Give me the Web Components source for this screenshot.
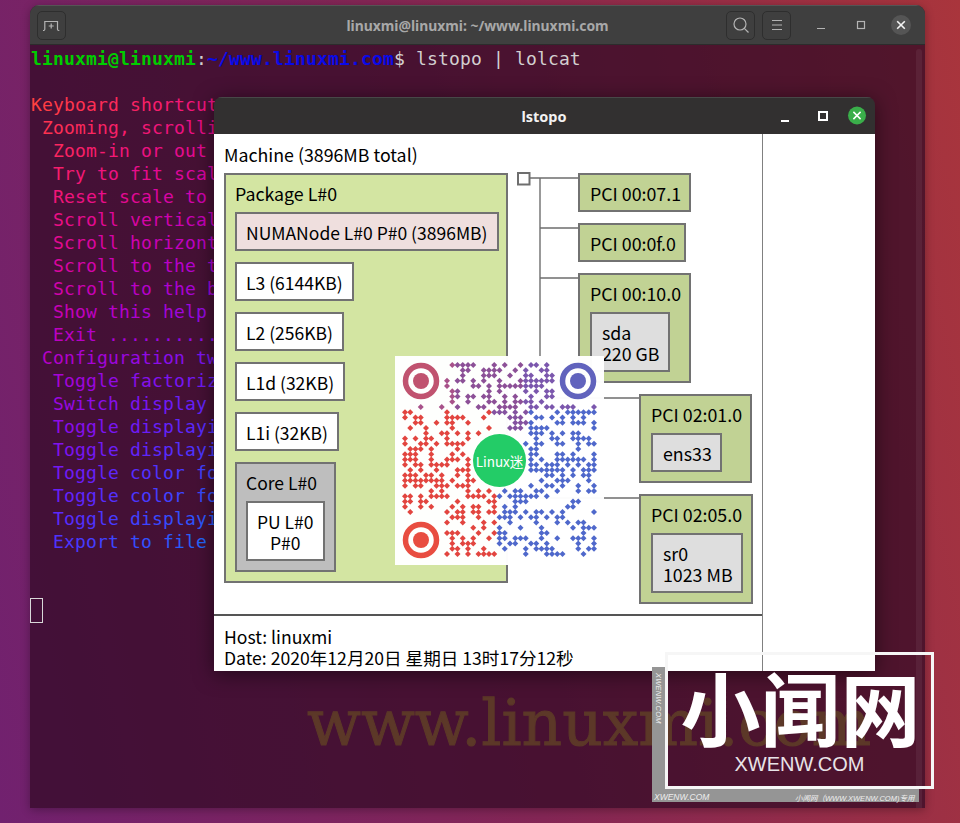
<!DOCTYPE html>
<html>
<head>
<meta charset="utf-8">
<title>lstopo</title>
<style>
    html, body { margin: 0; padding: 0; overflow: hidden; background: #7a2860; }
</style>
</head>
<body>
<desk-top>
    <term-window style="left:30px;top:5px"></term-window>
    <stamp-text style="left:307px;top:686px"></stamp-text>
    <topo-window style="left:214px;top:97px">
        <topo-box kind="package" parent style="left:10px;top:39px;width:284px" label="Package L#0">
            <topo-box kind="numa" label="NUMANode L#0 P#0 (3896MB)"></topo-box>
            <topo-box label="L3 (6144KB)"></topo-box>
            <topo-box label="L2 (256KB)"></topo-box>
            <topo-box label="L1d (32KB)"></topo-box>
            <topo-box label="L1i (32KB)"></topo-box>
            <topo-box kind="core" parent label="Core L#0">
                <topo-box label="PU L#0&#10;P#0" center></topo-box>
            </topo-box>
        </topo-box>
        <topo-box kind="pci" style="left:364px;top:39px" label="PCI 00:07.1"></topo-box>
        <topo-box kind="pci" style="left:364px;top:89px" label="PCI 00:0f.0"></topo-box>
        <topo-box kind="pci" parent style="left:364px;top:139px" label="PCI 00:10.0">
            <topo-box kind="dev" label="sda&#10;220 GB"></topo-box>
        </topo-box>
        <topo-box kind="pci" parent style="left:425px;top:260px" label="PCI 02:01.0">
            <topo-box kind="dev" label="ens33"></topo-box>
        </topo-box>
        <topo-box kind="pci" parent style="left:425px;top:360px" label="PCI 02:05.0">
            <topo-box kind="dev" label="sr0&#10;1023 MB"></topo-box>
        </topo-box>
    </topo-window>
    <qr-badge style="left:395px;top:356px"></qr-badge>
    <xwenw-mark style="left:652px;top:652px"></xwenw-mark>
</desk-top>

<script>
class DeskTop extends HTMLElement {
    constructor() {
        super();
        this.attachShadow({ mode: 'open' });
        this.shadowRoot.innerHTML = `
            <style>
                :host {
                    display: block;
                    position: relative;
                    width: 960px;
                    height: 823px;
                    overflow: hidden;
                    background: linear-gradient(78deg, #71216f 0%, #842655 48%, #a9353c 100%);
                }
                ::slotted(*) { position: absolute; }
            </style>
            <slot></slot>
        `;
    }
}

// only what shows left of the lstopo window
const termLines = [
    'Keyboard shortcut',
    ' Zooming, scrolli',
    '  Zoom-in or out',
    '  Try to fit scal',
    '  Reset scale to',
    '  Scroll vertical',
    '  Scroll horizont',
    '  Scroll to the t',
    '  Scroll to the b',
    '  Show this help',
    '  Exit ..........',
    ' Configuration tw',
    '  Toggle factoriz',
    '  Switch display',
    '  Toggle displayi',
    '  Toggle displayi',
    '  Toggle color fo',
    '  Toggle color fo',
    '  Toggle displayi',
    '  Export to file'
];

// same sine rainbow lolcat uses
function lolColor(row, col) {
    const t = 0.1 * (row + col / 3) + Math.PI / 2;
    const c = (p) => Math.round(Math.sin(t + p) * 127 + 128);
    return `rgb(${c(0)},${c(2 * Math.PI / 3)},${c(4 * Math.PI / 3)})`;
}

class TermWindow extends HTMLElement {
    constructor() {
        super();
        this.attachShadow({ mode: 'open' });
    }

    connectedCallback() {
        const rows = termLines.map((line, row) => {
            const chars = [...line].map((ch, col) => `<span style="color:${lolColor(row, col)}">${ch}</span>`).join('');
            return `<div class="line">${chars}</div>`;
        }).join('');

        this.shadowRoot.innerHTML = `
            <style>
                :host {
                    display: flex;
                    flex-direction: column;
                    width: 895px;
                    height: 803px;
                    border-radius: 9px 9px 0 0;
                    overflow: hidden;
                    background: rgba(48, 10, 36, .72);
                    box-shadow: 0 2px 10px rgba(0,0,0,.3);
                }
                header {
                    flex: none;
                    height: 40px;
                    display: flex;
                    align-items: center;
                    position: relative;
                    padding: 0 14px 0 7px;
                    box-sizing: border-box;
                    background: #3f3f3f;
                    border-top: 1px solid #555;
                    border-bottom: 1px solid #2c2c2c;
                }
                h1 {
                    position: absolute;
                    left: 0;
                    right: 0;
                    margin: 0;
                    text-align: center;
                    font: 700 13.9px "Noto Sans", sans-serif;
                    color: #a8a8a8;
                }
                .btn {
                    position: relative;
                    width: 29px;
                    height: 29px;
                    box-sizing: border-box;
                    border: 1px solid #2e2e2e;
                    border-radius: 5px;
                    display: flex;
                    align-items: center;
                    justify-content: center;
                    margin-right: 7px;
                }
                .gap { flex: 1; }
                .ctl { width: 20px; height: 20px; margin-left: 20px; display: block; }
                svg { display: block; fill: none; stroke: #b4b4b4; stroke-width: 1.2; }
                main {
                    flex: 1;
                    position: relative;
                    padding: 2px 0 0 1px;
                    font: 18px/23px "DejaVu Sans Mono", monospace;
                    letter-spacing: .16px;
                    color: #d3cfd0;
                }
                .prompt b { font-weight: bold; }
                .line { height: 23px; white-space: pre; }
                .cursor {
                    width: 13px;
                    height: 25px;
                    box-sizing: border-box;
                    border: 1px solid #d8d8d8;
                    margin: 45px 0 0 -1px;
                }
                .bar {
                    position: absolute;
                    right: 3px;
                    top: 4px;
                    bottom: 0;
                    width: 6px;
                    background: rgba(255,255,255,.06);
                    border-radius: 3px 3px 0 0;
                }
            </style>
            <header>
                <h1>linuxmi@linuxmi: ~/www.linuxmi.com</h1>
                <div class="btn">
                    <svg width="20" height="16" viewBox="0 0 20 16"><path d="M1 13.5h.6c.8 0 1.2-.5 1.2-1.2V4.5H15.5v7.8c0 .7.4 1.2 1.2 1.2h.6M9.2 6.5v5M6.7 9h5"/></svg>
                </div>
                <div class="gap"></div>
                <div class="btn">
                    <svg width="18" height="18" viewBox="0 0 18 18"><circle cx="8" cy="8" r="6"/><path d="M12.3 12.3l4.2 4.2"/></svg>
                </div>
                <div class="btn">
                    <svg width="12" height="12" viewBox="0 0 12 12"><path d="M1 1.5h10M1 6h10M1 10.5h10"/></svg>
                </div>
                <svg class="ctl" style="margin-left:13px" viewBox="0 0 20 20"><path d="M6 13.5h8"/></svg>
                <svg class="ctl" viewBox="0 0 20 20"><rect x="6.5" y="6.5" width="7" height="7"/></svg>
                <svg class="ctl" viewBox="0 0 20 20"><circle cx="10" cy="10" r="10" fill="#555" stroke="none"/><path d="M6.2 6.2l7.6 7.6M13.8 6.2l-7.6 7.6" stroke="#f4f4f4" stroke-width="1.6"/></svg>
            </header>
            <main>
                <div class="line prompt"><b style="color:#00cd00">linuxmi@linuxmi</b>:<b style="color:#0a0ae8">~/www.linuxmi.com</b>$ lstopo | lolcat</div>
                <div class="line"></div>
                ${rows}
                <div class="cursor"></div>
                <div class="bar"></div>
            </main>
        `;
    }
}

class StampText extends HTMLElement {
    constructor() {
        super();
        this.attachShadow({ mode: 'open' });
        this.shadowRoot.innerHTML = `
            <style>
                :host {
                    display: block;
                    font: 63px/1.2 "DejaVu Serif", serif;
                    color: #5c3828;
                    -webkit-text-stroke: 1px #5c3828;
                    white-space: nowrap;
                }
            </style>
            www.linuxmi.com
        `;
    }
}

class TopoWindow extends HTMLElement {
    constructor() {
        super();
        this.attachShadow({ mode: 'open' });
        this.shadowRoot.innerHTML = `
            <style>
                :host {
                    display: flex;
                    flex-direction: column;
                    width: 661px;
                    height: 574px;
                    border-radius: 8px 8px 0 0;
                    overflow: hidden;
                    box-shadow: 0 3px 20px rgba(0,0,0,.5);
                    font: 17.8px/21px "Noto Sans CJK SC", "Noto Sans", sans-serif;
                    color: #000;
                }
                header {
                    flex: none;
                    height: 37px;
                    box-sizing: border-box;
                    display: flex;
                    align-items: center;
                    justify-content: flex-end;
                    position: relative;
                    padding-right: 8px;
                    background: #323030;
                    border-top: 1px solid #484848;
                }
                h1 {
                    position: absolute;
                    left: 0;
                    width: 660px;
                    margin: 0;
                    text-align: center;
                    font: 700 14.5px "Noto Sans", sans-serif;
                    color: #f2f2f2;
                }
                header svg { position: relative; display: block; margin-left: 14px; fill: none; stroke: #fff; stroke-width: 2; }
                .body { flex: 1; display: flex; background: #fff; min-height: 0; }
                .pane {
                    flex: none;
                    width: 549px;
                    box-sizing: border-box;
                    border-right: 1px solid #808080;
                    display: flex;
                    flex-direction: column;
                }
                .canvas {
                    flex: none;
                    position: relative;
                    height: 480px;
                    border-bottom: 2px solid #555;
                    box-sizing: content-box;
                }
                .title { position: absolute; left: 10px; top: 10px; white-space: nowrap; }
                .canvas svg { position: absolute; left: 0; top: 0; }
                ::slotted(topo-box) { position: absolute; }
                .status { padding: 10px 0 0 10px; white-space: nowrap; font-size: 17.6px; }
            </style>
            <header>
                <h1>lstopo</h1>
                <svg width="20" height="20" viewBox="0 0 20 20"><path d="M2 15h8"/></svg>
                <svg width="20" height="20" viewBox="0 0 20 20"><rect x="6" y="6" width="8" height="8"/></svg>
                <svg width="20" height="20" viewBox="0 0 20 20"><circle cx="10" cy="9.5" r="9" fill="#3aae4a" stroke="none"/><path d="M6.4 5.9l7.2 7.2M13.6 5.9l-7.2 7.2" stroke-width="1.5"/></svg>
            </header>
            <div class="body">
                <div class="pane">
                    <div class="canvas">
                        <div class="title">Machine (3896MB total)</div>
                        <svg width="548" height="480" viewBox="214 134 548 480" fill="none" stroke="#6e6e6e" stroke-width="1.4">
                            <rect x="518" y="173" width="11.5" height="11.5" stroke-width="2"/>
                            <path d="M530 178H579M540 178V498M540 228H579M540 278H579M540 398H640M540 498H640"/>
                        </svg>
                        <slot></slot>
                    </div>
                    <div class="status">Host: linuxmi<br>Date: 2020年12月20日 星期日 13时17分12秒</div>
                </div>
            </div>
        `;
    }
}

const boxFills = {
    package: '#d3e5a2',
    core: '#bebebe',
    numa: '#efdfde',
    pci: '#c1d294',
    dev: '#dedede'
};

class TopoBox extends HTMLElement {
    constructor() {
        super();
        this.attachShadow({ mode: 'open' });
    }

    connectedCallback() {
        const kind = this.getAttribute('kind');
        const fill = boxFills[kind] || '#fff';
        const isParent = this.hasAttribute('parent');
        const isIo = kind === 'pci' || kind === 'dev';
        const size = isIo || kind === 'package' ? 17.8 : 17.5;
        this.shadowRoot.innerHTML = `
            <style>
                :host {
                    display: inline-flex;
                    flex-direction: column;
                    box-sizing: border-box;
                    padding: 8px ${isIo ? 8 : 9}px ${isParent ? 9 : 6}px ${isIo ? 10 : 9}px;
                    background: ${fill};
                    border: 2px solid #727272;
                    font-size: ${size}px;
                }
                .label {
                    white-space: pre;
                    text-align: ${this.hasAttribute('center') ? 'center' : 'left'};
                }
                .kids {
                    display: ${isParent ? 'flex' : 'none'};
                    flex-direction: column;
                    align-items: flex-start;
                    gap: 11px;
                    margin-top: 8px;
                }
            </style>
            <div class="label"></div>
            <div class="kids"><slot></slot></div>
        `;
        this.shadowRoot.querySelector('.label').textContent = this.getAttribute('label');
    }
}

class QrBadge extends HTMLElement {
    constructor() {
        super();
        this.attachShadow({ mode: 'open' });
    }

    dotColor(x, y) {
        if (y < 52) {
            if (x < 60) return '#a8528a';
            if (x < 130) return '#8c5097';
            return '#7b57ad';
        }
        if (y < 75 && x > 95 && x < 135) return '#8452a0';
        return x < 102 ? '#e2453f' : '#4f68cb';
    }

    dots() {
        // cheap seeded noise so the pattern stays the same on each run
        let seed = 20201220;
        const next = () => {
            seed = (seed * 1664525 + 1013904223) >>> 0;
            return (seed >>> 16) / 65536;
        };
        const size = 37, step = 5.25;
        let out = '';
        for (let r = 0; r < size; r++) {
            for (let c = 0; c < size; c++) {
                const on = next() < 0.47;
                const inFinder = (r < 8 && c < 8) || (r < 8 && c > 28) || (r > 28 && c < 8);
                const x = 10 + c * step, y = 9 + r * step;
                const inLogo = Math.hypot(x - 104, y - 104) < 31;
                if (!on || inFinder || inLogo) continue;
                const d = 3;
                out += `<polygon points="${x},${y - d} ${x + d},${y} ${x},${y + d} ${x - d},${y}" fill="${this.dotColor(x, y)}"/>`;
            }
        }
        return out;
    }

    connectedCallback() {
        const ring = (cx, cy, col) => `
            <circle cx="${cx}" cy="${cy}" r="15.5" fill="none" stroke="${col}" stroke-width="5.5"/>
            <circle cx="${cx}" cy="${cy}" r="8" fill="${col}"/>`;
        this.shadowRoot.innerHTML = `
            <style>
                :host {
                    display: block;
                    width: 209px;
                    height: 209px;
                    position: absolute;
                    background: rgba(255,255,255,.975);
                }
                svg { display: block; }
                .logo {
                    position: absolute;
                    left: 78px;
                    top: 78px;
                    width: 53px;
                    height: 53px;
                    border-radius: 50%;
                    background: #23cc67;
                    display: flex;
                    align-items: center;
                    justify-content: center;
                    font: 13.5px "Noto Sans CJK SC", sans-serif;
                    color: #fff;
                }
            </style>
            <svg width="209" height="209" viewBox="0 0 209 209">
                ${this.dots()}
                ${ring(26, 25, '#c0536f')}
                ${ring(183, 25, '#6163bd')}
                ${ring(26, 184, '#e84d40')}
            </svg>
            <div class="logo">Linux迷</div>
        `;
    }
}

class XwenwMark extends HTMLElement {
    constructor() {
        super();
        this.attachShadow({ mode: 'open' });
        this.shadowRoot.innerHTML = `
            <style>
                :host {
                    display: block;
                    width: 282px;
                    height: 151px;
                    color: #fff;
                }
                .grey {
                    position: absolute;
                    left: 0;
                    top: 15px;
                    width: 267px;
                    height: 135px;
                    box-sizing: border-box;
                    border-left: 14px solid #959595;
                    border-bottom: 15px solid #959595;
                }
                .side {
                    position: absolute;
                    left: 2px;
                    top: 21px;
                    writing-mode: vertical-rl;
                    font: italic 7.5px "Liberation Sans", sans-serif;
                    letter-spacing: .2px;
                    color: #eee;
                }
                .foot {
                    position: absolute;
                    top: 140px;
                    font: italic 7.5px "Liberation Sans", "Noto Sans CJK SC", sans-serif;
                    color: #eee;
                    white-space: nowrap;
                }
                .frame {
                    position: absolute;
                    left: 13px;
                    top: 0;
                    width: 269px;
                    height: 137px;
                    box-sizing: border-box;
                    border: 3px solid #f6f6f6;
                    display: flex;
                    flex-direction: column;
                    align-items: center;
                }
                .big {
                    font: 700 80px/80px "Noto Sans CJK SC", sans-serif;
                    margin: 10px 0 0 2px;
                    white-space: nowrap;
                }
                .sub {
                    font: 20px/22px "Liberation Sans", sans-serif;
                    color: #e8e4e8;
                    margin-top: 8px;
                }
            </style>
            <div class="grey"></div>
            <div class="side">XWENW.COM</div>
            <div class="foot" style="left:2px;font-size:8.5px">XWENW.COM</div>
            <div class="foot" style="left:143px">小闻网（WWW.XWENW.COM)专用</div>
            <div class="frame">
                <div class="big">小闻网</div>
                <div class="sub">XWENW.COM</div>
            </div>
        `;
    }
}

customElements.define('desk-top', DeskTop);
customElements.define('term-window', TermWindow);
customElements.define('stamp-text', StampText);
customElements.define('topo-window', TopoWindow);
customElements.define('topo-box', TopoBox);
customElements.define('qr-badge', QrBadge);
customElements.define('xwenw-mark', XwenwMark);
</script>
</body>
</html>
